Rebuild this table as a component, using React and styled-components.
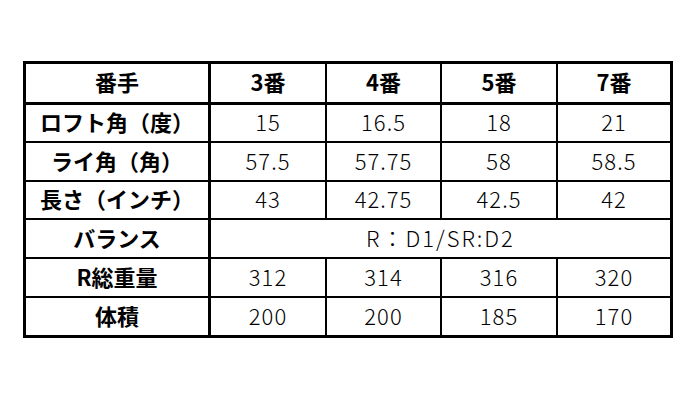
import React from "react"
import styled, { createGlobalStyle } from "styled-components"

const GlobalStyle = createGlobalStyle`
  html, body {
    margin: 0;
    background: #fff;
  }
  body {
    font-family: "Noto Sans CJK JP", "Noto Sans", sans-serif;
    color: #000;
  }
`

const COL_WIDTHS = [185, 116, 115, 116, 112]
const HEADER_HEIGHT = 41
const ROW_HEIGHTS = [38, 39, 38, 39, 39, 37]

const Page = styled.div`
  padding: 61px 0 0 23px;
`

const SpecTable = styled.table`
  width: 650px;
  table-layout: fixed;
  border-collapse: separate;
  border-spacing: 0;
  border: 3px solid #000;
`

const Row = styled.tr`
  height: ${({ height }) => height}px;
`

const Cell = styled.td`
  box-sizing: border-box;
  padding: 0 0 4px;
  text-align: center;
  vertical-align: middle;
  font-size: 22px;
  line-height: 1;
  font-weight: ${({ bold }) => (bold ? 700 : 300)};
  letter-spacing: ${({ bold, wide }) => (bold ? 0 : wide ? 2 : 1)}px;
  border-right: ${({ right }) => right}px solid #000;
  border-bottom: ${({ bottom }) => bottom}px solid #000;
  white-space: nowrap;
`

const header = ["番手", "3番", "4番", "5番", "7番"]

const rows = [
  ["ロフト角（度）", "15", "16.5", "18", "21"],
  ["ライ角（角）", "57.5", "57.75", "58", "58.5"],
  ["長さ（インチ）", "43", "42.75", "42.5", "42"],
  ["バランス", "R：D1/SR:D2"],
  ["R総重量", "312", "314", "316", "320"],
  ["体積", "200", "200", "185", "170"],
]

function rightBorder(i, last) {
  if (i === 0) return 3
  return last ? 0 : 2
}

export default function App() {
  return (
    <>
      <GlobalStyle />
      <Page>
        <SpecTable>
          <colgroup>
            {COL_WIDTHS.map((w, i) => (
              <col key={i} style={{ width: w }} />
            ))}
          </colgroup>
          <tbody>
            <Row height={HEADER_HEIGHT}>
              {header.map((h, i) => (
                <Cell
                  key={h}
                  bold
                  right={rightBorder(i, i === header.length - 1)}
                  bottom={3}
                >
                  {h}
                </Cell>
              ))}
            </Row>
            {rows.map((r, ri) => {
              const bottom = ri === rows.length - 1 ? 0 : 2
              const merged = r.length === 2
              return (
                <Row key={r[0]} height={ROW_HEIGHTS[ri]}>
                  {r.map((v, i) => (
                    <Cell
                      key={i}
                      bold={i === 0}
                      wide={merged && i === 1}
                      colSpan={merged && i === 1 ? 4 : undefined}
                      right={rightBorder(i, merged ? i === 1 : i === r.length - 1)}
                      bottom={bottom}
                    >
                      {v}
                    </Cell>
                  ))}
                </Row>
              )
            })}
          </tbody>
        </SpecTable>
      </Page>
    </>
  )
}
